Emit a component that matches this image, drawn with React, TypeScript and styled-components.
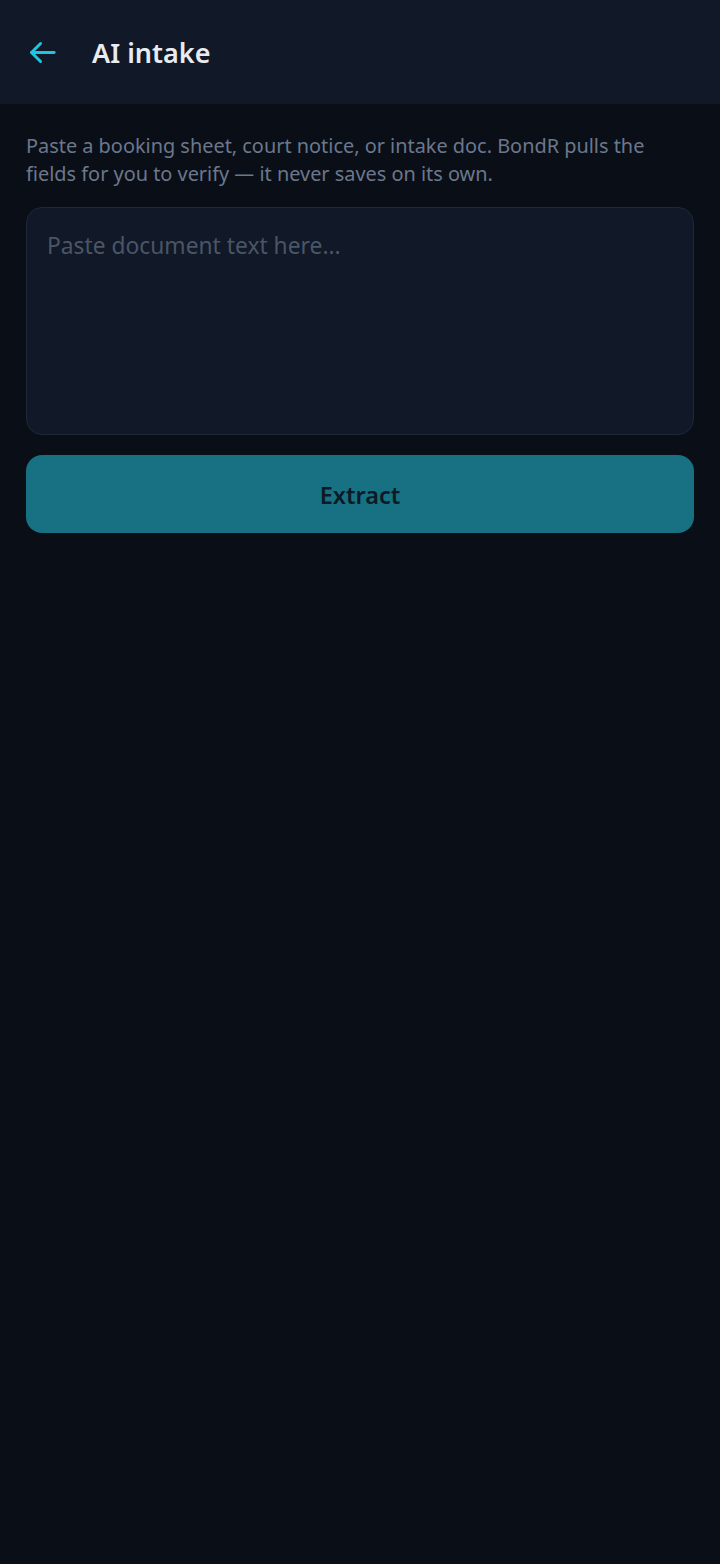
import styled, { createGlobalStyle } from "styled-components";

const GlobalStyle = createGlobalStyle`
    html, body {
        margin: 0;
        padding: 0;
        background: #0a0e16;
    }
    * {
        box-sizing: border-box;
    }
    body {
        font-family: "Noto Sans", "Open Sans", sans-serif;
    }
`

const Screen = styled.div`
    min-height: 1564px;
    background: #0a0e16;
    display: flex;
    flex-direction: column;
`

const Header = styled.header`
    height: 104px;
    background: #111827;
    display: flex;
    align-items: center;
    padding: 0 27px;
    gap: 34px;
`

const BackButton = styled.button`
    width: 31px;
    height: 31px;
    padding: 0;
    border: none;
    background: transparent;
    color: #22c3e0;
    display: flex;
    align-items: center;
    justify-content: center;
    cursor: pointer;
`

const Title = styled.h1`
    margin: 0;
    color: #e8ebf0;
    font-size: 27px;
    font-weight: 600;
`

const Content = styled.main`
    display: flex;
    flex-direction: column;
    padding: 28px 26px 0 26px;
`

const Hint = styled.p`
    margin: 0;
    color: #6b788c;
    font-size: 19.9px;
    line-height: 28px;
`

const DocInput = styled.textarea`
    margin-top: 19px;
    height: 228px;
    width: 100%;
    resize: none;
    background: #111827;
    border: 1.5px solid #1f2836;
    border-radius: 16px;
    padding: 22px 20px;
    color: #e8ebf0;
    font-family: inherit;
    font-size: 22.8px;
    line-height: 32px;
    outline: none;

    &::placeholder {
        color: #4a5566;
    }
`

const ExtractButton = styled.button`
    margin-top: 20px;
    height: 78px;
    width: 100%;
    border: none;
    border-radius: 16px;
    background: #177183;
    color: #0b1a24;
    font-family: inherit;
    font-size: 23.5px;
    font-weight: 600;
    padding-top: 3px;
    cursor: pointer;
`

export default function App() {
    return (
        <>
            <GlobalStyle />
            <Screen>
                <Header>
                    <BackButton aria-label="Back">
                        <svg width="31" height="31" viewBox="0 0 24 24" fill="none" stroke="currentColor" strokeWidth="2.3" strokeLinecap="round" strokeLinejoin="round">
                            <path d="M21 12H3.5" />
                            <path d="M10.5 5l-7 7 7 7" />
                        </svg>
                    </BackButton>
                    <Title>AI intake</Title>
                </Header>
                <Content>
                    <Hint>
                        Paste a booking sheet, court notice, or intake doc. BondR pulls the fields for you to verify — it never saves on its own.
                    </Hint>
                    <DocInput placeholder="Paste document text here..." />
                    <ExtractButton>Extract</ExtractButton>
                </Content>
            </Screen>
        </>
    )
}
